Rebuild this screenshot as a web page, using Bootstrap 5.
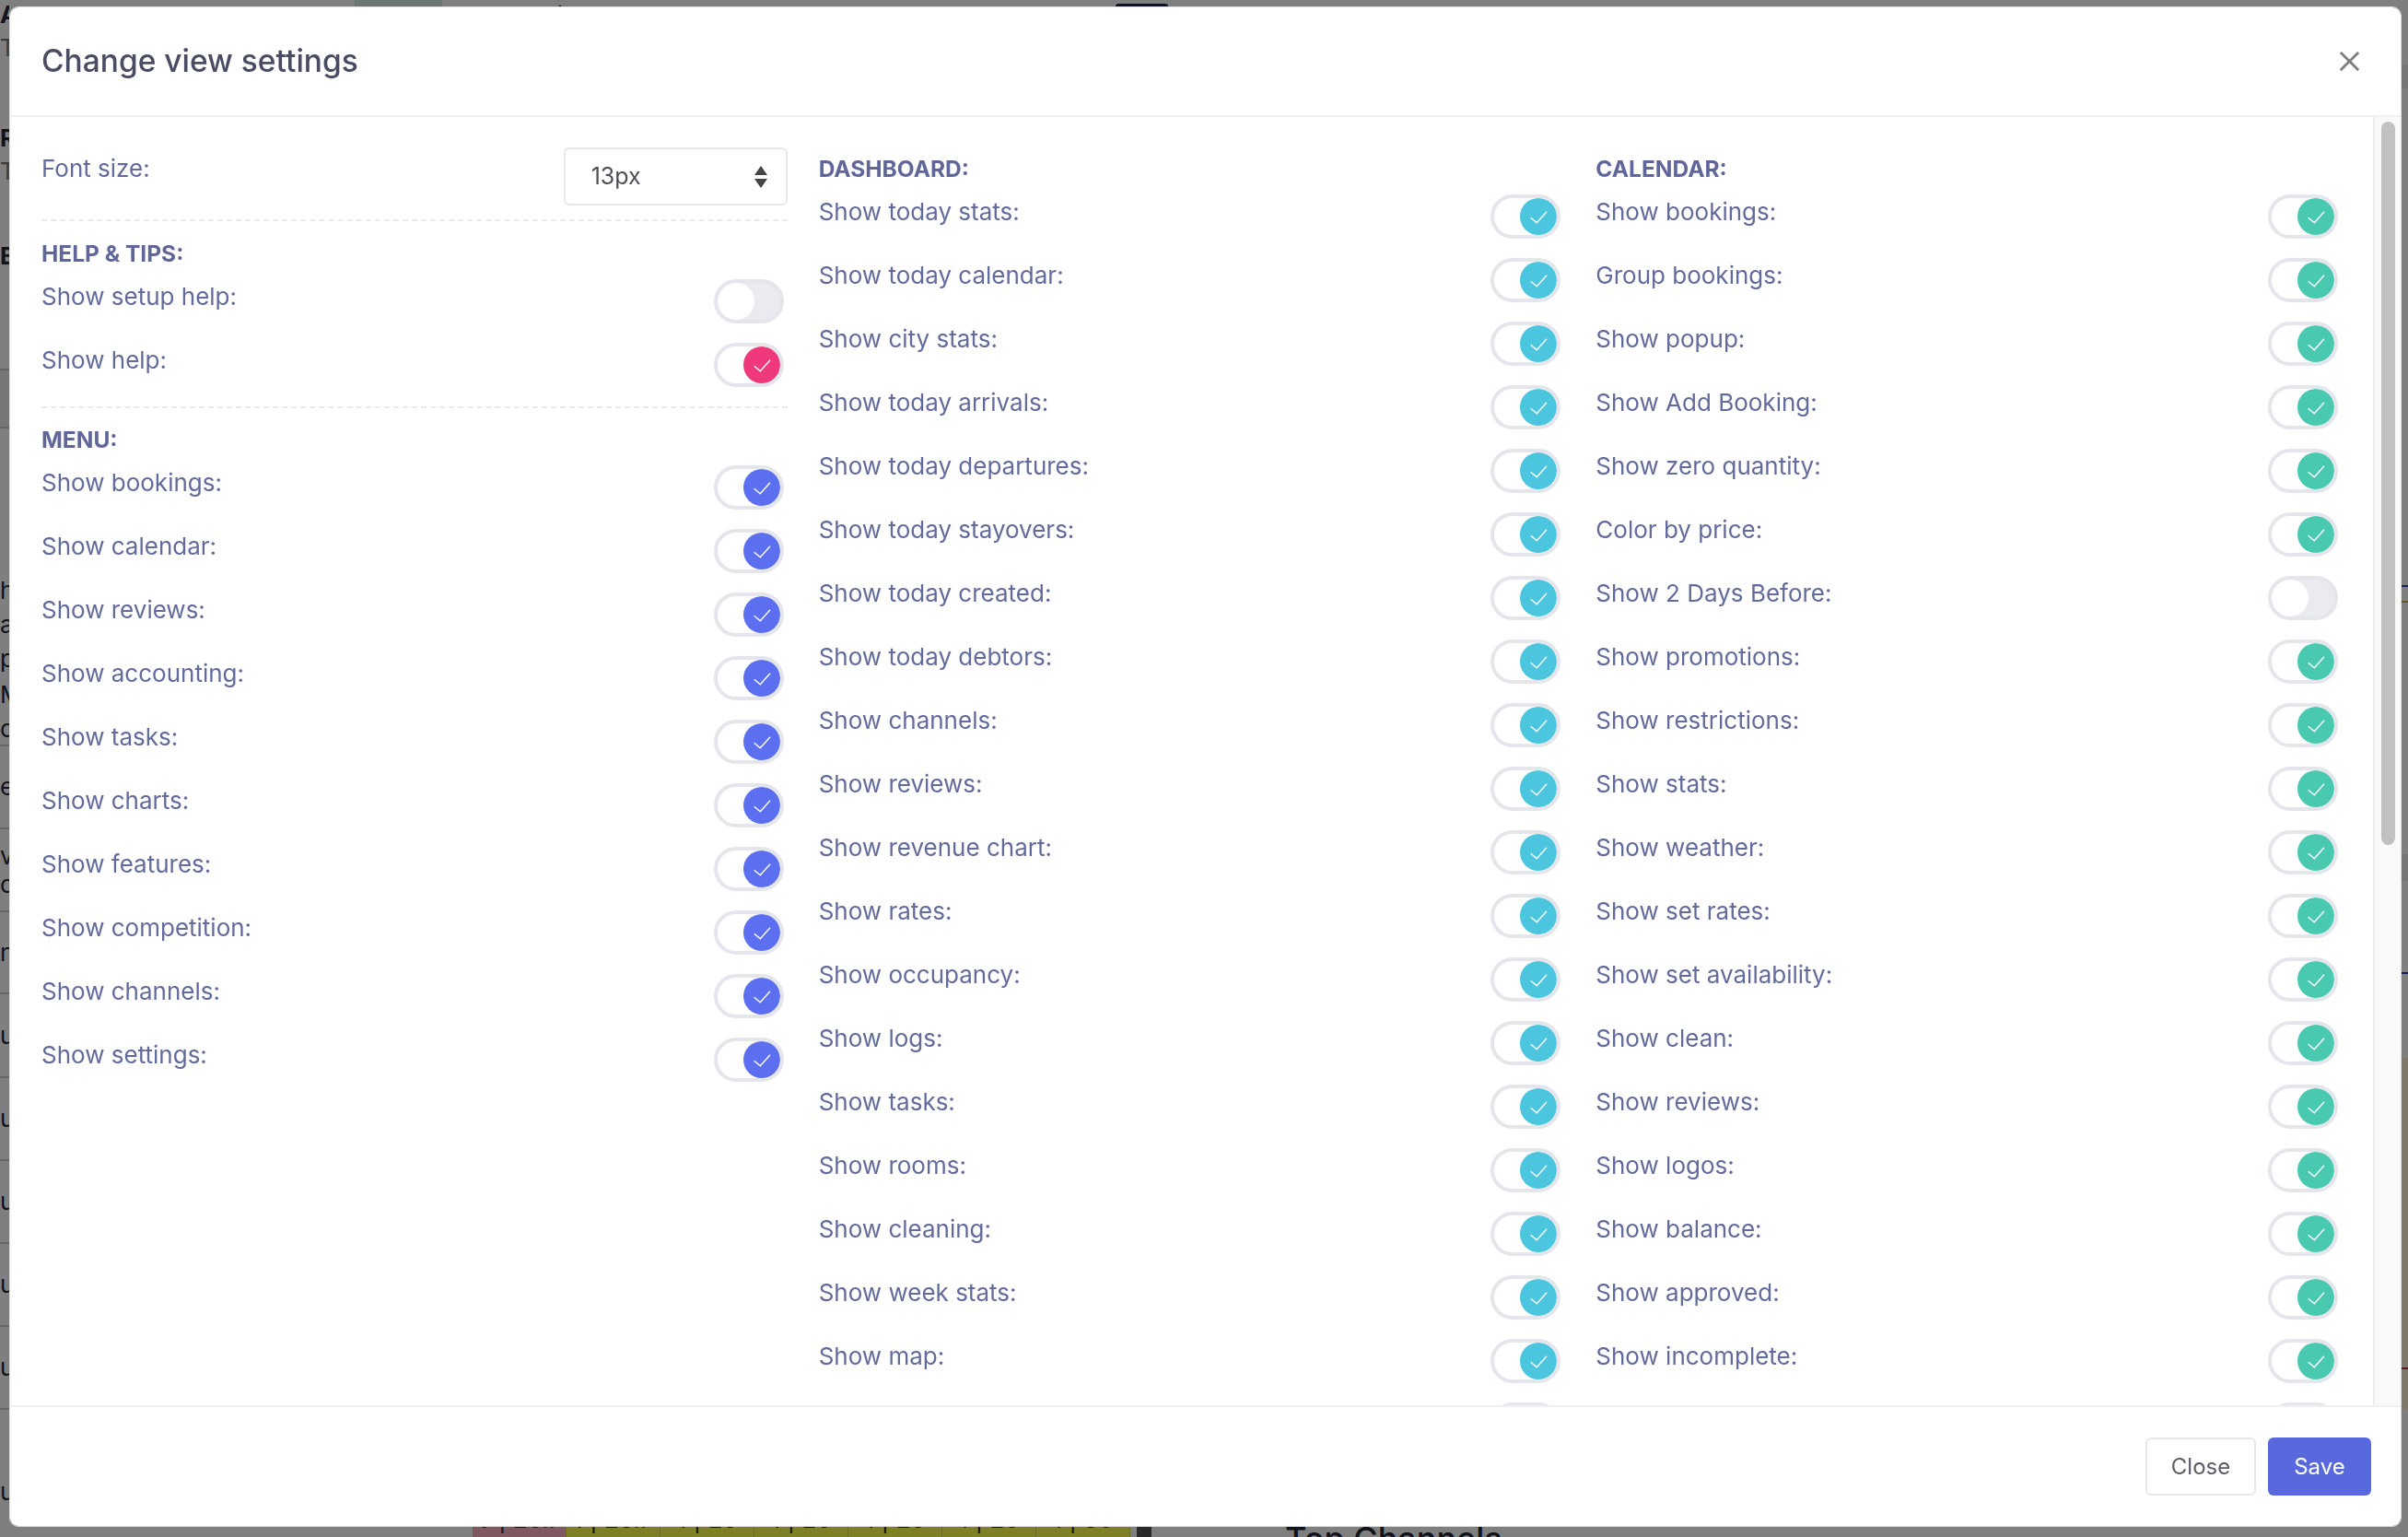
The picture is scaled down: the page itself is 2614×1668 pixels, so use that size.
<!DOCTYPE html>
<html lang="en">
  <head>
    <meta charset="UTF-8" />
    <meta name="viewport" content="width=device-width, initial-scale=1.0" />
    <title>Change view settings</title>
    <link
      rel="stylesheet"
      href="https://cdn.jsdelivr.net/npm/bootstrap@5.3.0/dist/css/bootstrap.min.css"
    />
    <style>
      body {
        font-family: "Inter", "Liberation Sans", sans-serif;
        overflow: hidden;
      }
      /* page behind the modal, only the edges stay visible */
      .behind {
        height: 100vh;
        color: #23263a;
      }
      .edge-left {
        width: 10px;
        overflow: hidden;
        font-size: 26px;
      }
      .edge-right {
        width: 7px;
        overflow: hidden;
      }
      .edge-row {
        overflow: hidden;
        line-height: 1.2;
      }
      .edge-mid {
        min-width: 0;
      }
      .top-strip {
        height: 7px;
        overflow: hidden;
        font-size: 26px;
        line-height: 34px;
      }
      .top-chip {
        width: 95px;
        margin-left: 375px;
        background: #d9ece6;
      }
      .top-si {
        margin-left: 108px;
        width: 520px;
      }
      .top-pill {
        width: 57px;
        margin-left: 103px;
        margin-top: 4px;
        background: #1b2a4e;
        border-radius: 14px 14px 0 0;
      }
      .bottom-strip {
        height: 30px;
        overflow: hidden;
        font-size: 26px;
      }
      .cell {
        width: 102px;
        height: 30px;
        text-align: center;
        line-height: 22px;
        background: #ffff4d;
        border-right: 1px solid #d8d84a;
      }
      .cell-first {
        margin-left: 503px;
        background: #ffb0c4;
      }
      .scroll-stub {
        width: 16px;
        height: 30px;
        margin-left: 7px;
        background: #555;
      }
      .top-channels {
        margin-left: 145px;
        margin-top: 14px;
        font-size: 36px;
        line-height: 1;
        font-weight: 500;
      }

      .modal-dialog.wide {
        max-width: none;
        width: auto;
        margin: 7px 7px 11px 10px;
      }
      .wide .modal-content {
        height: 1650px;
        border: 1px solid #dfdfdf;
        border-radius: 10px;
      }
      .wide .modal-header {
        height: 119px;
        flex-shrink: 0;
        padding: 0 44px 0 34px;
        border-bottom: 2px solid #eef0f3;
      }
      .wide .modal-title {
        font-size: 33.5px;
        font-weight: 500;
        color: #4a4c63;
      }
      .wide .btn-close {
        width: 23px;
        height: 23px;
        padding: 0;
        margin: 0;
        background-size: 23px;
      }
      .body-wrap {
        min-height: 0;
      }
      .wide .modal-body {
        overflow: hidden;
        padding: 37px 34px 0;
        color: #636a9c;
        font-size: 26px;
        line-height: 38px;
      }
      .wide .row {
        --bs-gutter-x: 34px;
      }
      .rail {
        width: 30px;
        flex-shrink: 0;
        background: #f9f9f9;
        border-left: 2px solid #eeeeee;
        padding: 5px 6px 0 7px;
      }
      .rail-thumb {
        height: 785px;
        background: #c1c1c1;
        border-radius: 8px;
      }
      .sec-title {
        font-weight: 700;
        font-size: 24.5px;
        margin-bottom: 9px;
        color: #60669a;
      }
      .font-pick {
        width: 243px;
        height: 63px;
        margin-top: -4px;
        padding: 0 28px;
        font-size: 25px;
        color: #4e4f58;
        border: 2px solid #e6e8ec;
        border-radius: 6px;
        background-size: 14px 24px;
        background-position: right 20px center;
        background-image: url("data:image/svg+xml,%3csvg xmlns='http://www.w3.org/2000/svg' viewBox='0 0 14 24'%3e%3cpath fill='%23444' d='M7 0l7 10H0zM7 24L0 14h14z'/%3e%3c/svg%3e");
      }
      .dash {
        margin: 15px 0 16px;
        border: 0;
        border-top: 2px dashed #e8eaef;
        opacity: 1;
      }
      .dash-2 {
        margin: 11px 0 15px;
      }
      .sw-row {
        height: 48px;
        min-height: 0;
        margin-bottom: 21px;
        padding-left: 0;
      }
      .form-switch .form-check-input.sw {
        width: 76px;
        height: 48px;
        margin: 0 4px 0 0;
        flex-shrink: 0;
        background-color: #e9ebf0;
        border: 4px solid #e4e6ec;
        box-shadow: none;
        background-size: 40px 40px;
        background-position: left center;
        background-image: url("data:image/svg+xml,%3csvg xmlns='http://www.w3.org/2000/svg' viewBox='0 0 40 40'%3e%3ccircle cx='20' cy='20' r='20' fill='%23fff'/%3e%3c/svg%3e");
      }
      .form-switch .form-check-input.sw:checked {
        background-color: #fff;
        background-position: right center;
      }
      .form-switch .form-check-input.sw-blue:checked {
        background-image: url("data:image/svg+xml,%3csvg xmlns='http://www.w3.org/2000/svg' viewBox='0 0 40 40'%3e%3ccircle cx='20' cy='20' r='20' fill='%235b6ff0'/%3e%3cpath fill='none' stroke='%23fff' stroke-width='1.4' d='M11.7 21.3l6.6 5.4L29 14.7'/%3e%3c/svg%3e");
      }
      .form-switch .form-check-input.sw-pink:checked {
        background-image: url("data:image/svg+xml,%3csvg xmlns='http://www.w3.org/2000/svg' viewBox='0 0 40 40'%3e%3ccircle cx='20' cy='20' r='20' fill='%23f0397c'/%3e%3cpath fill='none' stroke='%23fff' stroke-width='1.4' d='M11.7 21.3l6.6 5.4L29 14.7'/%3e%3c/svg%3e");
      }
      .form-switch .form-check-input.sw-cyan:checked {
        background-image: url("data:image/svg+xml,%3csvg xmlns='http://www.w3.org/2000/svg' viewBox='0 0 40 40'%3e%3ccircle cx='20' cy='20' r='20' fill='%234bc6de'/%3e%3cpath fill='none' stroke='%23fff' stroke-width='1.4' d='M11.7 21.3l6.6 5.4L29 14.7'/%3e%3c/svg%3e");
      }
      .form-switch .form-check-input.sw-green:checked {
        background-image: url("data:image/svg+xml,%3csvg xmlns='http://www.w3.org/2000/svg' viewBox='0 0 40 40'%3e%3ccircle cx='20' cy='20' r='20' fill='%234ac9b1'/%3e%3cpath fill='none' stroke='%23fff' stroke-width='1.4' d='M11.7 21.3l6.6 5.4L29 14.7'/%3e%3c/svg%3e");
      }
      .wide .modal-footer {
        height: 131px;
        flex-shrink: 0;
        padding: 0 32px 0 0;
        gap: 13px;
        border-top: 2px solid #eef0f3;
      }
      .wide .modal-footer .btn {
        margin: 0;
        height: 63px;
        font-size: 24px;
        border-radius: 6px;
      }
      .btn-close-plain {
        width: 120px;
        color: #5a5c66;
        background: #fff;
        border: 2px solid #e6e8ec;
      }
      .btn-save {
        width: 112px;
        color: #fff;
        background: #5969dd;
        border: 0;
      }
    </style>
  </head>
  <body>
    <div class="behind d-flex">
      <div class="edge-left" id="edge-left"></div>
      <div class="edge-mid flex-grow-1 d-flex flex-column justify-content-between">
        <div class="top-strip d-flex">
          <div class="top-chip"></div>
          <div class="top-si">Si</div>
          <div class="top-pill"></div>
        </div>
        <div class="bottom-strip d-flex">
          <div class="cell cell-first">0 | 26.7</div>
          <div class="cell">1 | 26.7</div>
          <div class="cell">1 | 26</div>
          <div class="cell">1 | 26</div>
          <div class="cell">1 | 26</div>
          <div class="cell">1 | 26</div>
          <div class="cell">1 | 30</div>
          <div class="scroll-stub"></div>
          <div class="top-channels">Top Channels</div>
        </div>
      </div>
      <div class="edge-right" id="edge-right"></div>
    </div>
    <div class="modal-backdrop show"></div>

    <div class="modal d-block" tabindex="-1">
      <div class="modal-dialog wide">
        <div class="modal-content">
          <div class="modal-header">
            <h5 class="modal-title">Change view settings</h5>
            <button type="button" class="btn-close" aria-label="Close"></button>
          </div>
          <div class="body-wrap d-flex flex-grow-1">
            <div class="modal-body flex-grow-1">
              <div class="row">
                <div class="col-4">
                  <div class="d-flex justify-content-between">
                    <label class="form-label m-0" for="font-size">Font size:</label>
                    <select class="form-select font-pick" id="font-size">
                      <option>13px</option>
                      <option>14px</option>
                      <option>15px</option>
                    </select>
                  </div>
                  <hr class="dash" />
                  <div class="sec-title">HELP &amp; TIPS:</div>
                  <div id="help-list"></div>
                  <hr class="dash dash-2" />
                  <div class="sec-title">MENU:</div>
                  <div id="menu-list"></div>
                </div>
                <div class="col-4">
                  <div class="sec-title">DASHBOARD:</div>
                  <div id="dash-list"></div>
                </div>
                <div class="col-4">
                  <div class="sec-title">CALENDAR:</div>
                  <div id="cal-list"></div>
                </div>
              </div>
            </div>
            <div class="rail"><div class="rail-thumb"></div></div>
          </div>
          <div class="modal-footer">
            <button type="button" class="btn btn-close-plain">Close</button>
            <button type="button" class="btn btn-save">Save</button>
          </div>
        </div>
      </div>
    </div>

    <script
      src="https://cdn.jsdelivr.net/npm/bootstrap@5.3.0/dist/js/bootstrap.bundle.min.js"
    ></script>
    <script>
      function renderList(id, colour, items) {
        let html = "";
        items.forEach((item) => {
          let off = item.startsWith("!");
          let text = off ? item.slice(1) : item;
          html += `<div class="form-check form-switch d-flex justify-content-between sw-row">
            <label class="form-check-label">${text}</label>
            <input class="form-check-input sw sw-${colour}" type="checkbox" ${off ? "" : "checked"} />
          </div>`;
        });
        document.getElementById(id).innerHTML = html;
      }

      renderList("help-list", "pink", ["!Show setup help:", "Show help:"]);
      renderList("menu-list", "blue", [
        "Show bookings:", "Show calendar:", "Show reviews:", "Show accounting:", "Show tasks:",
        "Show charts:", "Show features:", "Show competition:", "Show channels:", "Show settings:",
      ]);
      // the last entry of the next two lists sits under the footer edge, only its switch top shows
      renderList("dash-list", "cyan", [
        "Show today stats:", "Show today calendar:", "Show city stats:", "Show today arrivals:",
        "Show today departures:", "Show today stayovers:", "Show today created:", "Show today debtors:",
        "Show channels:", "Show reviews:", "Show revenue chart:", "Show rates:", "Show occupancy:",
        "Show logs:", "Show tasks:", "Show rooms:", "Show cleaning:", "Show week stats:", "Show map:", "",
      ]);
      renderList("cal-list", "green", [
        "Show bookings:", "Group bookings:", "Show popup:", "Show Add Booking:", "Show zero quantity:",
        "Color by price:", "!Show 2 Days Before:", "Show promotions:", "Show restrictions:", "Show stats:",
        "Show weather:", "Show set rates:", "Show set availability:", "Show clean:", "Show reviews:",
        "Show logos:", "Show balance:", "Show approved:", "Show incomplete:", "",
      ]);

      // edges of the page behind: [height, text, weight, border colour, background]
      const leftRows = [
        [32, "A", 700], [40, "T", 400, "", "", "#777"], [60, ""], [36, "R", 700], [36, "T", 400, "", "", "#777"],
        [56, ""], [36, "B", 700], [106, "", 400, "#ccc"], [63, "", 400, "#ccc", "#eee"], [158, ""],
        [36, "h"], [37, "a"], [38, "p"], [40, "M"], [36, "o", 400, "#ccc"],
        [90, "e", 400, "#ccc"], [90, "v<br>c", 400, "#ccc"], [89, "n", 400, "#ccc"],
        [91, "u", 400, "#ccc"], [90, "u", 400, "#ccc"], [90, "u", 400, "#ccc"], [90, "u", 400, "#ccc"],
        [90, "u", 400, "#ccc"], [50, "", 400], [78, "u"],
      ];
      document.getElementById("edge-left").innerHTML = leftRows
        .map(
          (r) =>
            `<div class="edge-row d-flex flex-column justify-content-center" style="height:${r[0]}px;font-weight:${r[2] || 400};color:${r[5] || "inherit"};background:${r[4] || "transparent"};${r[3] ? "border-bottom:2px solid " + r[3] : ""}"><span>${r[1]}</span></div>`
        )
        .join("");

      const rightRows = [
        [70, ""], [26, "#ececec"], [539, ""], [2, "#2c3fc4"], [15, ""], [2, "#c9b24a"],
        [273, ""], [29, "#ececec"], [99, ""], [2, "#2c3fc4"], [91, ""],
        [336, "#fff3d9"], [2, "#d02050"], [44, "#fff3d9"], [171, ""],
      ];
      document.getElementById("edge-right").innerHTML = rightRows
        .map((r) => `<div style="height:${r[0]}px;background:${r[1] || "transparent"}"></div>`)
        .join("");
    </script>
  </body>
</html>
